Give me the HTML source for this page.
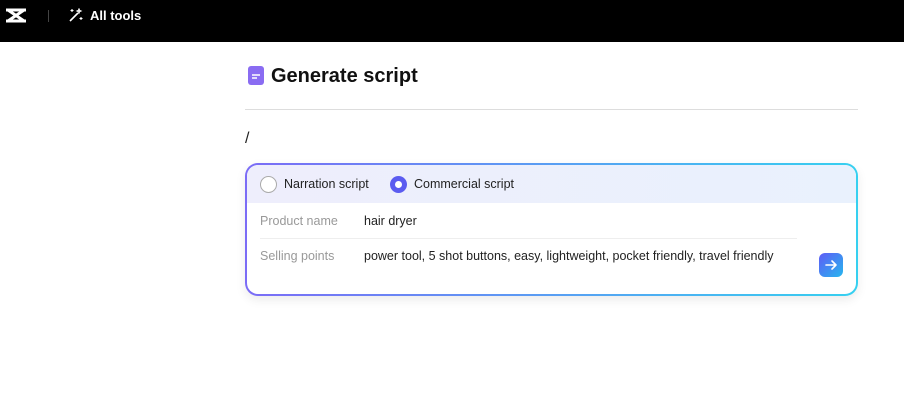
<!DOCTYPE html>
<html><head><style>
*{box-sizing:border-box;margin:0;padding:0}
body{width:904px;height:406px;background:#fff;font-family:"Liberation Sans",sans-serif;position:relative;overflow:hidden}
.top{position:absolute;left:0;top:0;width:904px;height:42px;background:#000}
.sep{position:absolute;left:48px;top:10px;width:1px;height:12px;background:#444}
.tools{position:absolute;left:90px;top:8px;color:#fff;font-size:13px;font-weight:bold}
h1{position:absolute;left:271px;top:65px;font-size:20px;font-weight:bold;color:#111}
.hr{position:absolute;left:245px;top:109px;width:613px;height:1px;background:#ddd}
.slash{position:absolute;left:245px;top:130px;font-size:16px;color:#222}
.card{position:absolute;left:245px;top:163px;width:613px;height:133px;border-radius:13px;padding:2px;background:linear-gradient(90deg,#7b6cf6,#36d0f0);box-shadow:0 4px 10px rgba(0,0,0,.08)}
.in{width:100%;height:100%;background:#fff;border-radius:11px;overflow:hidden;position:relative}
.hd{height:38px;background:linear-gradient(90deg,#eeeefc,#e9f1fd);position:relative;font-size:12.5px;color:#222}
.r{position:absolute;top:11px;width:17px;height:17px;border-radius:50%}
.lbl{position:absolute;font-size:12.5px;color:#999}
.val{position:absolute;font-size:12.5px;color:#222}
.btn{position:absolute;left:572px;top:88px;width:24px;height:24px;border-radius:6px;background:linear-gradient(135deg,#5f5cf6,#26b6ee)}
</style></head><body>
<div class="top">
<svg style="position:absolute;left:5px;top:8px" width="22" height="15" viewBox="0 0 22 15"><path d="M1 2h20M1 13h20M3 2l16 11M19 2L3 13" stroke="#fff" stroke-width="3" fill="none"/></svg>
<div class="sep"></div>
<svg style="position:absolute;left:68px;top:8px" width="15" height="15" viewBox="0 0 15 15"><path d="M2 13L10 5" stroke="#fff" stroke-width="1.6"/><path d="M11 1l.6 1.4L13 3l-1.4.6L11 5l-.6-1.4L9 3l1.4-.6zM4 1v3M2.5 2.5h3M13 9v3M11.5 10.5h3" stroke="#fff" stroke-width="1.1" fill="none"/></svg>
<div class="tools">All tools</div>
</div>
<svg style="position:absolute;left:248px;top:66px" width="16" height="19" viewBox="0 0 16 19"><rect x="0" y="0" width="16" height="19" rx="3" fill="#8a6cf2"/><path d="M4 9h8M4 12h5" stroke="#fff" stroke-width="1.4"/></svg>
<h1>Generate script</h1>
<div class="hr"></div>
<div class="slash">/</div>
<div class="card"><div class="in">
<div class="hd">
<div class="r" style="left:13px;border:1.5px solid #aaa;background:#fff"></div>
<div style="position:absolute;left:37px;top:12px">Narration script</div>
<div class="r" style="left:143px;background:#5b5cf0"><div style="position:absolute;left:5px;top:5px;width:7px;height:7px;border-radius:50%;background:#fff"></div></div>
<div style="position:absolute;left:167px;top:12px">Commercial script</div>
</div>
<div class="lbl" style="left:13px;top:49px">Product name</div>
<div class="val" style="left:117px;top:49px">hair dryer</div>
<div style="position:absolute;left:13px;top:73px;width:537px;height:1px;background:#eee"></div>
<div class="lbl" style="left:13px;top:84px">Selling points</div>
<div class="val" style="left:117px;top:84px">power tool, 5 shot buttons, easy, lightweight, pocket friendly, travel friendly</div>
<div class="btn"><svg width="24" height="24" viewBox="0 0 24 24"><path d="M7 12h10M13 8l4 4-4 4" stroke="#fff" stroke-width="1.6" fill="none" stroke-linecap="round" stroke-linejoin="round"/></svg></div>
</div></div>
</body></html>
